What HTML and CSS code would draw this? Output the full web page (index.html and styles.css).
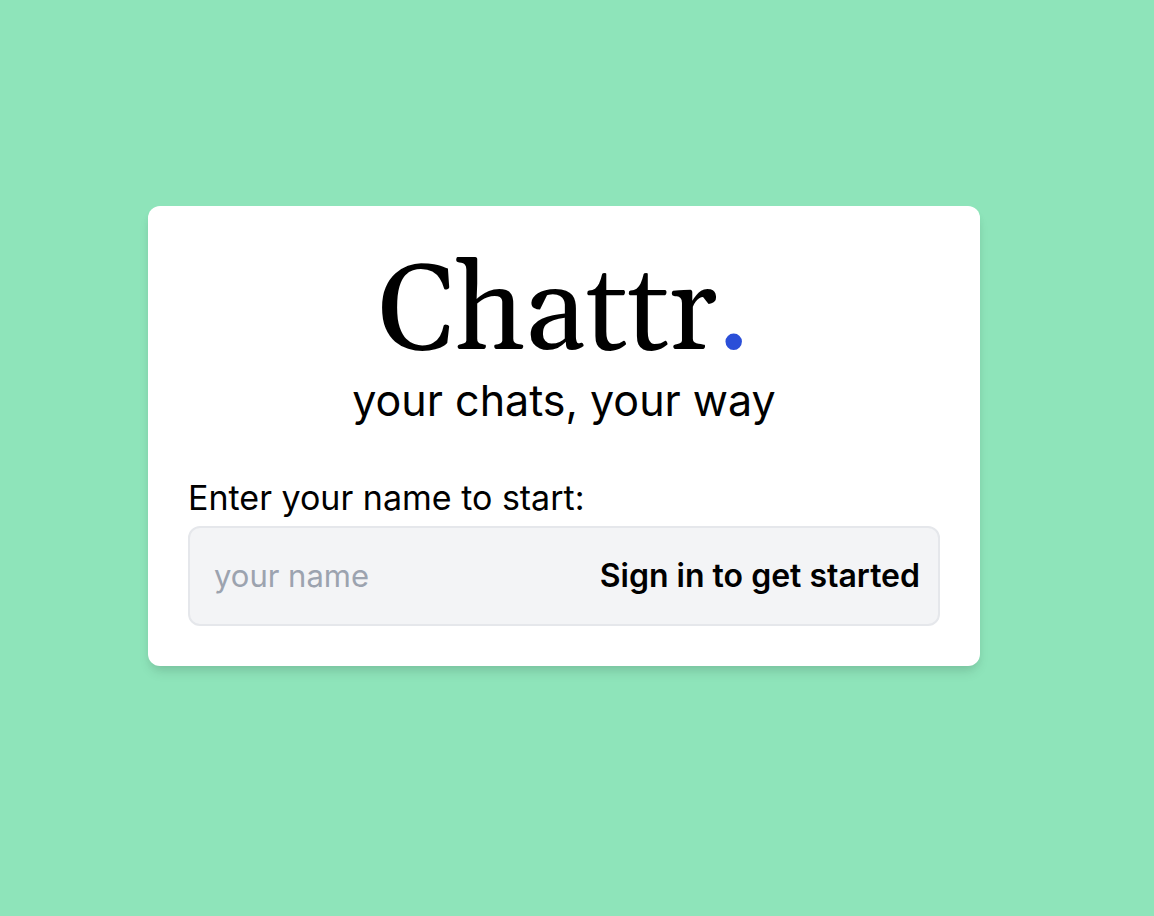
FILE: index.html
```html
<!DOCTYPE html>
<html lang="en">
<head>
<meta charset="utf-8">
<title>Chattr</title>
<link rel="stylesheet" href="styles.css">
</head>
<body>
<main class="page">
  <section class="card">
    <header class="brand">
      <h1 class="logo">Chattr<span class="logo-dot">.</span></h1>
      <p class="tagline">your chats, your way</p>
    </header>
    <form class="signin">
      <label class="label" for="name">Enter your name to start:</label>
      <div class="field">
        <input class="input" id="name" type="text" placeholder="your name">
        <button class="button" type="submit">Sign in to get started</button>
      </div>
    </form>
  </section>
</main>
</body>
</html>
```
FILE: styles.css
```css
* { box-sizing: border-box; }
body {
  margin: 0;
  background: #8ee4ba;
  color: #000;
  font-family: Inter, "Liberation Sans", sans-serif;
}
.page {
  display: flex;
  flex-direction: column;
  align-items: center;
  justify-content: center;
  min-height: 100vh;
  padding: 0 26px 44px 0;
}
.card {
  width: 100%;
  max-width: 832px;
  padding: 48px 40px 40px;
  background: #fff;
  border-radius: 12px;
  box-shadow: 0 8px 12px -2px rgba(0, 0, 0, 0.1), 0 4px 8px -2px rgba(0, 0, 0, 0.06);
}
.brand { text-align: center; }
.logo {
  margin: 0;
  font: 400 120px/120px Gelasio, Georgia, "Noto Serif", "DejaVu Serif", "Liberation Serif", serif;
}
.logo-dot { color: #2b4fd8; }
.tagline {
  margin: 0;
  font-size: 43px;
  line-height: 52px;
}
.signin { margin-top: 48px; }
.label {
  display: block;
  margin-bottom: 4px;
  font-size: 34px;
  line-height: 48px;
}
.field {
  display: flex;
  align-items: center;
  height: 100px;
  padding: 0 18px 0 24px;
  background: #f3f4f6;
  border: 2px solid #e5e7eb;
  border-radius: 12px;
}
.input {
  flex: 1;
  min-width: 0;
  padding: 0;
  border: 0;
  outline: 0;
  background: transparent;
  font: 400 31px/48px Inter, "Liberation Sans", sans-serif;
}
.input::placeholder { color: #9ca3af; opacity: 1; }
.button {
  padding: 0;
  border: 0;
  background: transparent;
  color: inherit;
  cursor: pointer;
  white-space: nowrap;
  font: 600 32px/48px Inter, "Liberation Sans", sans-serif;
}
```
